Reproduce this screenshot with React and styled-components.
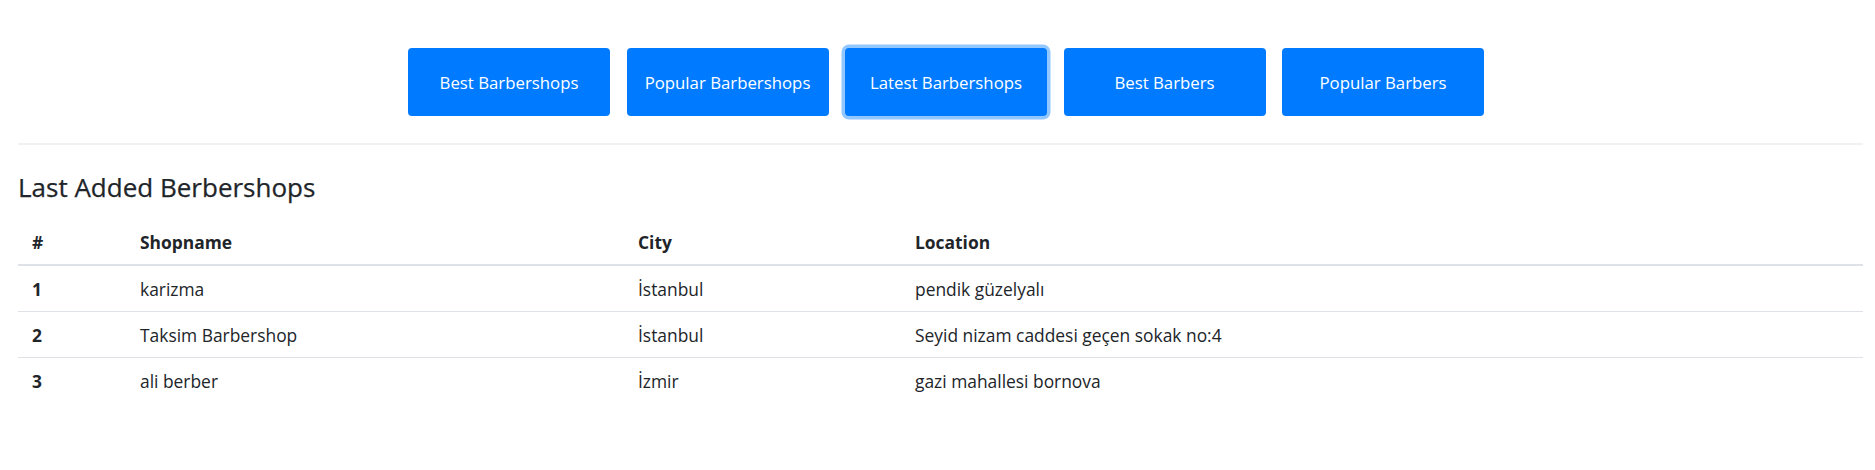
import React from "react";
import styled, { createGlobalStyle } from "styled-components";

const GlobalStyle = createGlobalStyle`
  html, body { margin: 0; padding: 0; background: #fff; }
  body {
    font-family: "Open Sans", "Noto Sans", Arial, sans-serif;
    color: #212529;
  }
`;

const Page = styled.div`
  padding: 48px 12px 40px 18px;
`;

const ButtonBar = styled.nav`
  display: flex;
  justify-content: center;
  gap: 16.5px;
  padding-left: 11px;
`;

const NavButton = styled.button`
  width: 202px;
  height: 68px;
  border: none;
  border-radius: 4px;
  background: #007bff;
  color: #fff;
  font-family: inherit;
  font-size: 16.8px;
  cursor: pointer;
  box-shadow: ${(p) => (p.$focused ? "0 0 0 3.5px rgba(38,143,255,0.5)" : "none")};
`;

const Divider = styled.hr`
  margin: 27px 0 0;
  border: none;
  border-top: 2px solid #f1f1f1;
`;

const Title = styled.h4`
  margin: 26px 0 16px;
  font-size: 26px;
  font-weight: 500;
  line-height: 32px;
  color: #212529;
  -webkit-text-stroke: 0.25px #212529;
`;

const Table = styled.table`
  width: 100%;
  border-collapse: collapse;
  table-layout: fixed;
  font-size: 17.4px;
`;

const HeadCell = styled.th`
  height: 45px;
  padding: 0 12px 0 ${(p) => (p.$first ? "14px" : "12px")};
  text-align: left;
  font-weight: 700;
  vertical-align: middle;
  border-bottom: 2px solid #dee2e6;
`;

const Row = styled.tr`
  & + & > * {
    border-top: 1px solid #dee2e6;
  }
`;

const RowHead = styled.th`
  height: 45px;
  padding: 0 12px 0 14px;
  text-align: left;
  font-weight: 700;
  vertical-align: middle;
`;

const Cell = styled.td`
  height: 45px;
  padding: 0 12px;
  vertical-align: middle;
`;

const buttons = [
  "Best Barbershops",
  "Popular Barbershops",
  "Latest Barbershops",
  "Best Barbers",
  "Popular Barbers",
];

const shops = [
  { id: 1, name: "karizma", city: "İstanbul", location: "pendik güzelyalı" },
  { id: 2, name: "Taksim Barbershop", city: "İstanbul", location: "Seyid nizam caddesi geçen sokak no:4" },
  { id: 3, name: "ali berber", city: "İzmir", location: "gazi mahallesi bornova" },
];

export default function App() {
  return (
    <>
      <GlobalStyle />
      <Page>
        <ButtonBar>
          {buttons.map((b) => (
            <NavButton key={b} $focused={b === "Latest Barbershops"}>
              {b}
            </NavButton>
          ))}
        </ButtonBar>
        <Divider />
        <Title>Last Added Berbershops</Title>
        <Table>
          <colgroup>
            <col style={{ width: "110px" }} />
            <col style={{ width: "498px" }} />
            <col style={{ width: "277px" }} />
            <col />
          </colgroup>
          <thead>
            <tr>
              <HeadCell $first>#</HeadCell>
              <HeadCell>Shopname</HeadCell>
              <HeadCell>City</HeadCell>
              <HeadCell>Location</HeadCell>
            </tr>
          </thead>
          <tbody>
            {shops.map((s) => (
              <Row key={s.id}>
                <RowHead>{s.id}</RowHead>
                <Cell>{s.name}</Cell>
                <Cell>{s.city}</Cell>
                <Cell>{s.location}</Cell>
              </Row>
            ))}
          </tbody>
        </Table>
      </Page>
    </>
  );
}
